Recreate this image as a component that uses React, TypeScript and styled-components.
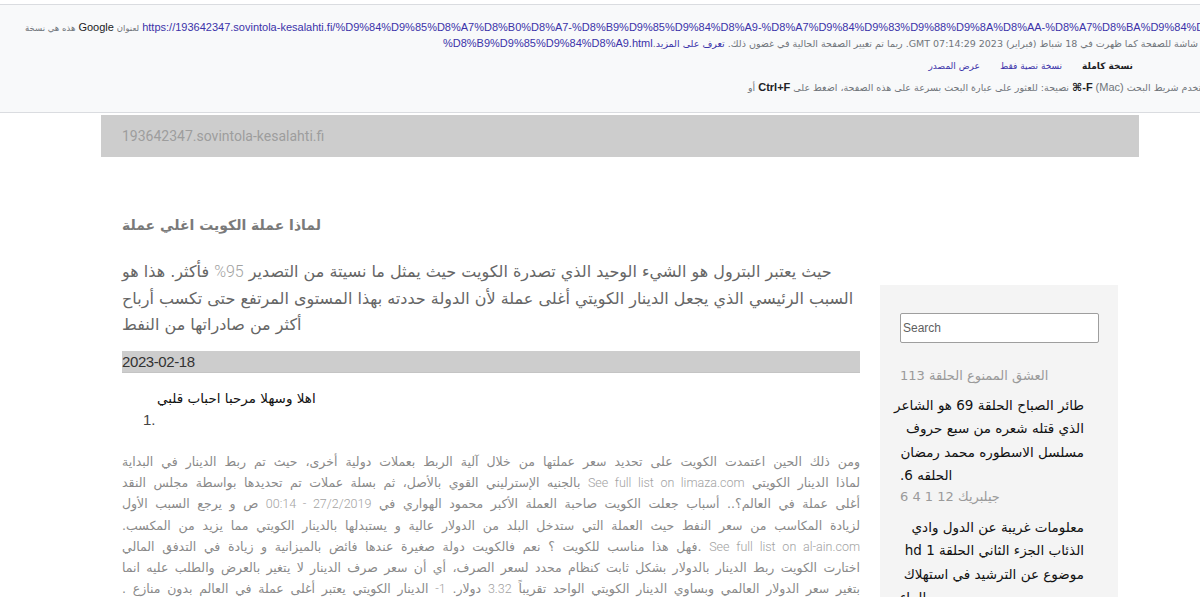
import React from 'react'
import styled, { createGlobalStyle } from 'styled-components'

const GlobalStyle = createGlobalStyle`
  html, body {
    margin: 0;
    padding: 0;
    background: #ffffff;
  }
  body {
    font-family: "Liberation Sans", Arial, "DejaVu Sans", sans-serif;
    overflow: hidden;
  }
`

/* ---------- cached-copy banner ---------- */

const CacheBar = styled.div`
  margin-top: 4px;
  height: 109px;
  box-sizing: border-box;
  border-top: 1px solid #dadce0;
  border-bottom: 1px solid #dadce0;
  background: #f8f9fa;
  padding-top: 15px;
  overflow: hidden;
  font-size: 11px;
  line-height: 15px;
  color: #70757a;
`

const CacheLine = styled.div<{ $indent: number; $gap?: number }>`
  white-space: nowrap;
  padding-left: ${(p) => p.$indent}px;
  margin-top: ${(p) => p.$gap ?? 0}px;
`

const Ar = styled.span<{ $size?: number }>`
  direction: rtl;
  unicode-bidi: isolate;
  font-family: "DejaVu Sans", sans-serif;
  font-size: ${(p) => p.$size ?? 8.5}px;
`

const Word = styled.span`
  color: #202124;
  margin: 0 3px;
`

const Key = styled.b`
  unicode-bidi: isolate;
  color: #202124;
  margin: 0 3px;
`

const Link = styled.a`
  color: #3b33a9;
  text-decoration: none;
`

const TabRow = styled.div`
  display: flex;
  direction: rtl;
  gap: 20px;
  padding-right: 67px;
  margin-top: 8px;
  font-family: "DejaVu Sans", sans-serif;
  font-size: 9px;
`

const Tab = styled.span<{ $active?: boolean }>`
  color: ${(p) => (p.$active ? '#202124' : '#3b33a9')};
  font-weight: ${(p) => (p.$active ? 700 : 400)};
`

/* ---------- site ---------- */

const Page = styled.div`
  margin: 2px 0 0 101px;
  width: 1038px;
`

const SiteBar = styled.div`
  height: 42px;
  background: #cdcdcd;
  padding-left: 21px;
  display: flex;
  align-items: center;
  font-family: Roboto, "Liberation Sans", sans-serif;
  font-size: 14px;
  color: #9d9d9d;
`

const Columns = styled.div`
  display: flex;
  align-items: flex-start;
  gap: 20px;
  padding: 0 21px;
`

const Main = styled.main`
  width: 738px;
  padding-top: 56px;
  font-family: "DejaVu Sans", sans-serif;
`

const Title = styled.h1`
  margin: 0;
  direction: rtl;
  text-align: left;
  font-size: 14px;
  line-height: 24px;
  font-weight: 700;
  color: #7a7a7a;
`

const Intro = styled.div`
  margin-top: 22px;
  color: #666666;
  font-size: 16px;
  line-height: 26.5px;
`

const Line = styled.div<{ $fill?: boolean; $right?: boolean }>`
  direction: rtl;
  white-space: nowrap;
  text-align: ${(p) => (p.$fill ? 'justify' : p.$right ? 'right' : 'left')};
  text-align-last: ${(p) => (p.$fill ? 'justify' : p.$right ? 'right' : 'left')};
`

const Lt = styled.span`
  font-family: Roboto, "Liberation Sans", sans-serif;
  font-weight: 300;
  color: #a2a2a2;
`

const DateBar = styled.div`
  margin-top: 12px;
  height: 21px;
  background: #cdcdcd;
  border-bottom: 1px solid #c4c4c4;
  display: flex;
  align-items: center;
  font-family: "Liberation Sans Narrow", "Liberation Sans", sans-serif;
  font-size: 15px;
  letter-spacing: -0.4px;
  color: #333333;
`

const Greeting = styled.div`
  margin-top: 14px;
  padding-left: 35px;
  direction: rtl;
  text-align: left;
  font-size: 13.5px;
  line-height: 22px;
  color: #111111;
`

const Marker = styled.div`
  padding-left: 21px;
  font-family: "Liberation Sans Narrow", "Liberation Sans", sans-serif;
  font-size: 15px;
  line-height: 22px;
  color: #444444;
`

const Body = styled.div`
  margin-top: 20.5px;
  font-size: 12.5px;
  line-height: 21.2px;
  color: #8a8a8a;
`

/* ---------- sidebar ---------- */

const Sidebar = styled.aside`
  width: 238px;
  height: 420px;
  box-sizing: border-box;
  margin-top: 128px;
  padding: 28px 19px 0 20px;
  background: #f4f4f4;
  font-family: "DejaVu Sans", sans-serif;
`

const SearchBox = styled.input`
  display: block;
  box-sizing: border-box;
  width: 199px;
  height: 30px;
  margin: 0;
  padding: 0 2px;
  border: 1px solid #9e9e9e;
  border-radius: 2px;
  background: #ffffff;
  font-family: "Liberation Sans", Arial, sans-serif;
  font-size: 12px;
  color: #333;

  &::placeholder {
    color: #5f5f5f;
  }
`

const SideGroup = styled.div<{ $gap: number }>`
  width: 184px;
  margin-top: ${(p) => p.$gap}px;
`

const SideMeta = styled(Line)`
  font-size: 13px;
  line-height: 20px;
  color: #9a9a9a;
`

const SideLink = styled(Line)`
  font-size: 13.5px;
  line-height: 23.3px;
  color: #111111;
`

const URL_HEAD =
  'https://193642347.sovintola-kesalahti.fi/%D9%84%D9%85%D8%A7%D8%B0%D8%A7-%D8%B9%D9%85%D9%84%D8%A9-%D8%A7%D9%84%D9%83%D9%88%D9%8A%D8%AA-%D8%A7%D8%BA%D9%84%D9%8A-'
const URL_TAIL = '%D8%B9%D9%85%D9%84%D8%A9.html'

const intro = [
  <>حيث يعتبر البترول هو الشيء الوحيد الذي تصدرة الكويت حيث يمثل ما نسيتة من التصدير <Lt>95%</Lt> فأكثر. هذا هو</>,
  <>السبب الرئيسي الذي يجعل الدينار الكويتي أغلى عملة لأن الدولة حددته بهذا المستوى المرتفع حتى تكسب أرباح</>,
  <>أكثر من صادراتها من النفط</>,
]

const body = [
  <>ومن ذلك الحين اعتمدت الكويت على تحديد سعر عملتها من خلال آلية الربط بعملات دولية أخرى، حيث تم ربط الدينار في البداية</>,
  <>لماذا الدينار الكويتي <Lt>See full list on limaza.com</Lt> بالجنيه الإسترليني القوي بالأصل، ثم بسلة عملات تم تحديدها بواسطة مجلس النقد</>,
  <>أغلى عملة في العالم؟.. أسباب جعلت الكويت صاحبة العملة الأكبر محمود الهواري في <Lt>27/2/2019 - 00:14</Lt> ص و يرجع السبب الأول</>,
  <>لزيادة المكاسب من سعر النفط حيث العملة التي ستدخل البلد من الدولار عالية و يستبدلها بالدينار الكويتي مما يزيد من المكسب.</>,
  <><Lt>See full list on al-ain.com</Lt> .فهل هذا مناسب للكويت ؟ نعم فالكويت دولة صغيرة عندها فائض بالميزانية و زيادة في التدفق المالي</>,
  <>اختارت الكويت ربط الدينار بالدولار بشكل ثابت كنظام محدد لسعر الصرف، أي أن سعر صرف الدينار لا يتغير بالعرض والطلب عليه انما</>,
  <>بتغير سعر الدولار العالمي وبساوي الدينار الكويتي الواحد تقريباً <Lt>3.32</Lt> دولار. <Lt>1-</Lt> الدينار الكويتي يعتبر أغلى عملة في العالم بدون منازع .</>,
]

export default function App() {
  return (
    <>
      <GlobalStyle />
      <CacheBar>
        <CacheLine $indent={25}>
          <Ar>هذه هي نسخة</Ar>
          <Word>Google</Word>
          <Ar>لعنوان</Ar> <Link href="#">{URL_HEAD}</Link>
        </CacheLine>
        <CacheLine $indent={443}>
          <Link href="#">{URL_TAIL}</Link>
          <Ar $size={9.5}>
            {' '}عن لقطة شاشة للصفحة كما ظهرت في 18 شباط (فبراير) 2023 07:14:29 GMT. ربما تم تغيير الصفحة الحالية في غضون ذلك.{' '}
            <Link href="#">تعرف على المزيد</Link>.
          </Ar>
        </CacheLine>
        <TabRow>
          <Tab $active>نسخة كاملة</Tab>
          <Tab>نسخة نصية فقط</Tab>
          <Tab>عرض المصدر</Tab>
        </TabRow>
        <CacheLine $indent={748} $gap={6}>
          <Ar $size={9.5}>أو</Ar>
          <Key>Ctrl+F</Key>
          <Ar $size={9.5}>نصيحة: للعثور على عبارة البحث بسرعة على هذه الصفحة، اضغط على</Ar>
          <Key>⌘-F</Key>
          <span>(Mac)</span> <Ar $size={9.5}>واستخدم شريط البحث</Ar>
        </CacheLine>
      </CacheBar>

      <Page>
        <SiteBar>193642347.sovintola-kesalahti.fi</SiteBar>
        <Columns>
          <Main>
            <Title>لماذا عملة الكويت اغلي عملة</Title>
            <Intro>
              {intro.map((l, i) => (
                <Line key={i}>{l}</Line>
              ))}
            </Intro>
            <DateBar>2023-02-18</DateBar>
            <Greeting>اهلا وسهلا مرحبا احباب قلبي</Greeting>
            <Marker>1.</Marker>
            <Body>
              {body.map((l, i) => (
                <Line key={i} $fill>
                  {l}
                </Line>
              ))}
            </Body>
          </Main>

          <Sidebar>
            <SearchBox placeholder="Search" />
            <SideGroup $gap={23}>
              <SideMeta>العشق الممنوع الحلقة 113</SideMeta>
            </SideGroup>
            <SideGroup $gap={8}>
              <SideLink $right>طائر الصباح الحلقة 69 هو الشاعر</SideLink>
              <SideLink $right>الذي قتله شعره من سبع حروف</SideLink>
              <SideLink $right>مسلسل الاسطوره محمد رمضان</SideLink>
              <SideLink>الحلقه 6.</SideLink>
            </SideGroup>
            <SideGroup $gap={0}>
              <SideMeta>جيلبريك 12 1 4 6</SideMeta>
            </SideGroup>
            <SideGroup $gap={9}>
              <SideLink $right>معلومات غريبة عن الدول وادي</SideLink>
              <SideLink $right>الذئاب الجزء الثاني الحلقة 1 hd</SideLink>
              <SideLink $right>موضوع عن الترشيد في استهلاك</SideLink>
              <SideLink>الماء</SideLink>
            </SideGroup>
          </Sidebar>
        </Columns>
      </Page>
    </>
  )
}
